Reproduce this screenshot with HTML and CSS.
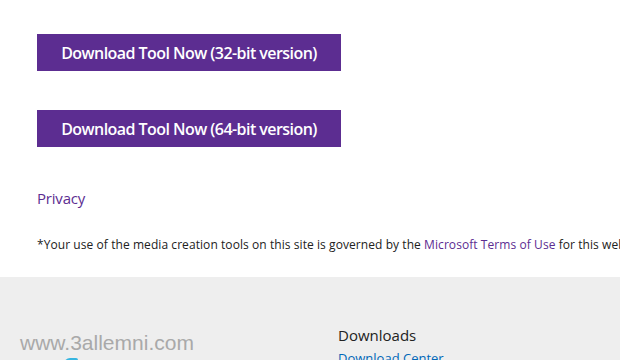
FILE: index.html
```html
<!DOCTYPE html>
<html lang="en">
  <head>
    <meta charset="UTF-8" />
    <title>Download Tool</title>
    <link rel="stylesheet" href="styles.css">
  </head>
  <body>
    <div class="main">
      <div class="btns">
        <a class="download-button" href="#">Download Tool Now (32-bit version)</a>
        <a class="download-button" href="#">Download Tool Now (64-bit version)</a>
      </div>
      <a class="privacy" href="#">Privacy</a>
      <p class="note">*Your use of the media creation tools on this site is governed by the <a href="#">Microsoft Terms of Use</a> for this website.</p>
    </div>
    <div class="footer">
      <div class="footer-left">
        <div class="watermark">www.3allemni.com</div>
        <div class="logo"></div>
      </div>
      <div class="footer-col">
        <h4>Downloads</h4>
        <a href="#">Download Center</a>
      </div>
    </div>
  </body>
</html>
```
FILE: styles.css
```css
* {
  margin: 0;
  padding: 0;
  box-sizing: border-box;
}
html,
body {
  width: 100%;
  height: 100%;
  overflow: hidden;
  background: #fff;
  font-family: "Open Sans", "Noto Sans", sans-serif;
}
.main {
  padding: 34px 0 0 37px;
  height: 277px;
}
.btns {
  display: flex;
  flex-direction: column;
  gap: 39px;
}
.download-button {
  display: flex;
  align-items: center;
  justify-content: center;
  width: 304px;
  height: 37px;
  background: #5c2d91;
  color: #fff;
  font-size: 16px;
  font-weight: 600;
  letter-spacing: -0.55px;
  text-decoration: none;
}
.privacy {
  display: inline-block;
  margin-top: 41px;
  color: #5c2d91;
  font-size: 15px;
  text-decoration: none;
  letter-spacing: -0.2px;
}
.note {
  margin-top: 27px;
  font-size: 12px;
  color: #222;
  white-space: nowrap;
  letter-spacing: 0.07px;
}
.note a {
  color: #5c2d91;
  text-decoration: none;
}
.footer {
  display: flex;
  height: 83px;
  background: #eeeeee;
  padding-top: 48px;
}
.footer-left {
  width: 338px;
  padding: 6px 0 0 20px;
}
.watermark {
  font-family: "Liberation Sans", Arial, sans-serif;
  font-size: 21px;
  line-height: 24px;
  color: #a9a9a9;
}
.logo {
  width: 14px;
  height: 8px;
  margin: 3px 0 0 44px;
  background: #36b5e0;
  border-radius: 6px 2px 0 0;
}
.footer-col h4 {
  font-size: 15px;
  font-weight: 400;
  color: #222;
}
.footer-col a {
  display: block;
  margin-top: 4px;
  font-size: 13px;
  color: #0067b8;
  text-decoration: none;
}
```
